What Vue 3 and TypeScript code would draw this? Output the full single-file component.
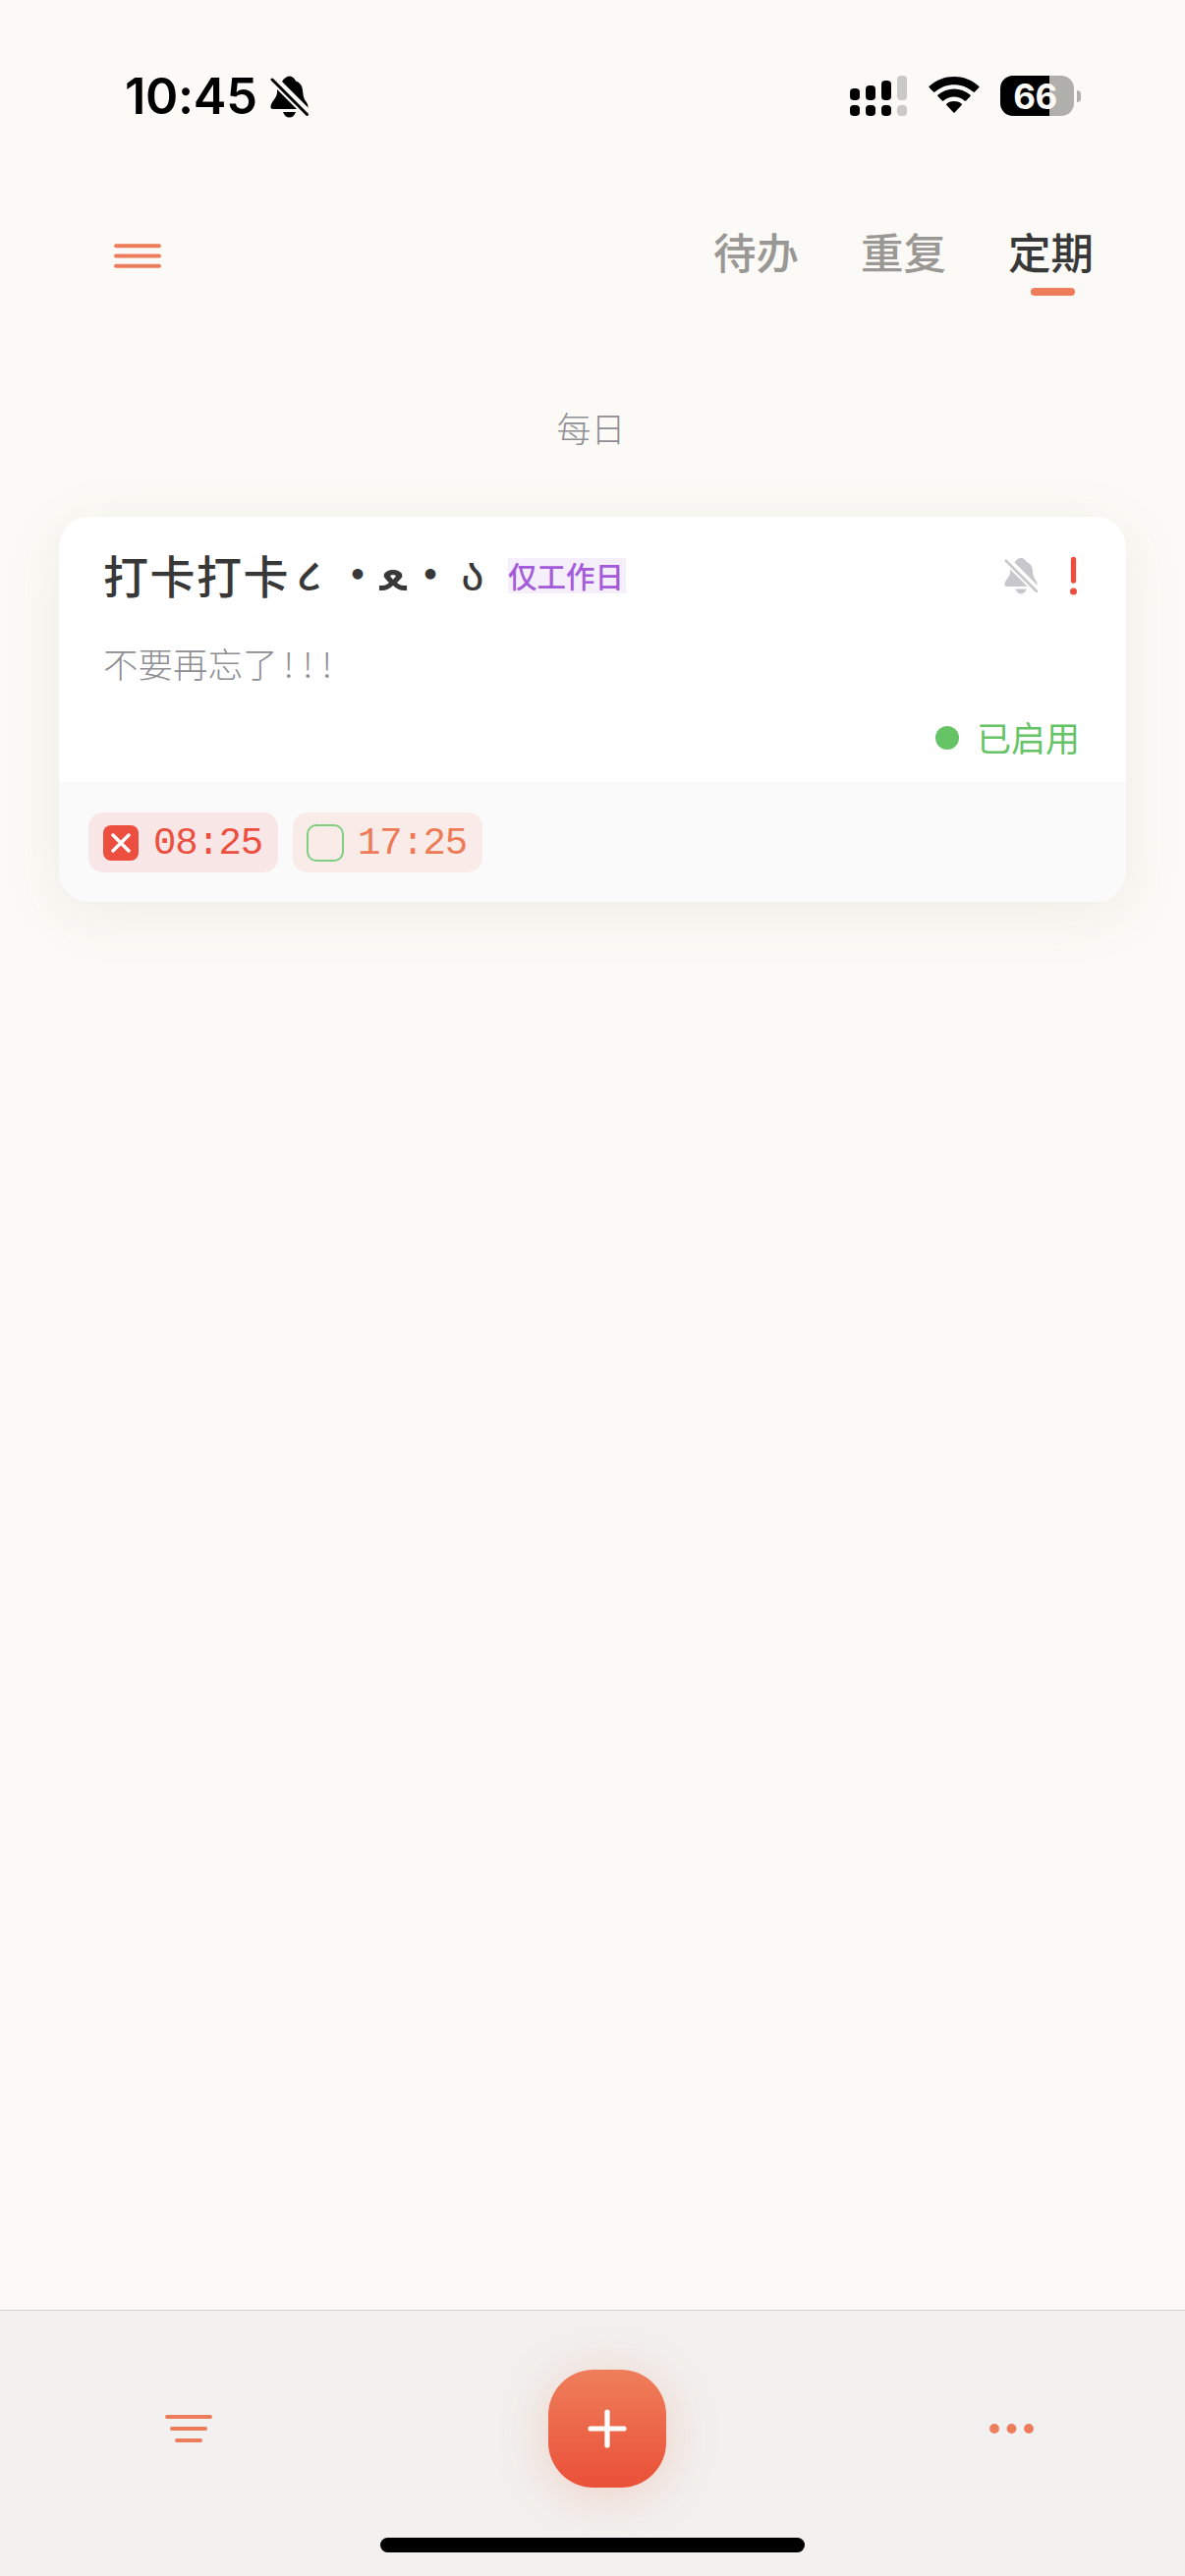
<script setup lang="ts">
interface Tab { label: string; active: boolean }
interface Slot { time: string; missed: boolean }

const tabs: Tab[] = [
  { label: '待办', active: false },
  { label: '重复', active: false },
  { label: '定期', active: true },
]
const slots: Slot[] = [
  { time: '08:25', missed: true },
  { time: '17:25', missed: false },
]
</script>

<template>
  <div class="screen">
    <header class="status">
      <span class="clock">10:45</span>
      <svg class="bell" width="40" height="43" viewBox="0 0 40 43">
        <path d="M7 14C8 23 2 24 .5 31Q0 34 3 34H27Z M12 6Q15 1 19.500 .5Q24 1 26 5.500C33 8 33 14 33.500 19C34 26 39 27 38.500 32.500Z M13 37H26Q24 42.500 19.500 42.500Q15 42.500 13 37Z" />
        <path class="slash" d="M2 4L37.500 39.500" />
      </svg>
      <div class="spacer"></div>
      <svg class="signal" width="58" height="42" viewBox="0 0 58 42">
        <rect x="0" y="13" width="10" height="12" rx="4" /><rect x="16" y="10" width="10" height="15" rx="4" />
        <rect x="32" y="5" width="10" height="20" rx="4" /><rect class="dim" x="48" y="0" width="10" height="25" rx="4" />
        <rect x="0" y="30" width="10" height="11" rx="4" /><rect x="16" y="30" width="10" height="11" rx="4" />
        <rect x="32" y="30" width="10" height="11" rx="4" /><rect class="dim" x="48" y="30" width="10" height="11" rx="4" />
      </svg>
      <svg class="wifi" width="52" height="38" viewBox="0 0 52 38">
        <path d="M.8 11.200Q0 10.500 .8 9.700C15-3.200 37-3.200 51.200 9.700Q52 10.500 51.200 11.200L47 15.600Q46.300 16.300 45.500 15.600C34.500 5.700 17.500 5.700 6.500 15.600Q5.700 16.300 5 15.600Z" />
        <path d="M9.500 20Q8.800 19.300 9.600 18.500C19 10.500 33 10.500 42.400 18.500Q43.200 19.300 42.500 20L38.200 24.500Q37.500 25.200 36.700 24.500C30.500 19.200 21.500 19.200 15.300 24.500Q14.500 25.200 13.800 24.500Z" />
        <path d="M18.300 29Q17.600 28.300 18.500 27.500C23 24.300 29 24.300 33.500 27.500Q34.400 28.300 33.700 29L26.600 36.500Q26 37 25.400 36.500Z" />
      </svg>
      <div class="battery">66</div>
      <div class="nub"></div>
    </header>

    <nav class="nav">
      <svg class="menu" width="48" height="25" viewBox="0 0 48 25"><path d="M2 2.300H46M2 12.500H46M2 22.700H46" /></svg>
      <div class="tabs">
        <div v-for="t in tabs" :key="t.label" class="tab" :class="{ active: t.active }">{{ t.label }}</div>
      </div>
    </nav>

    <h2 class="group">每日</h2>

    <section class="card">
      <div class="body">
        <div class="row">
          <div class="title">
            <span>打卡打卡</span><span class="face k1">૮</span><span class="face k2">・</span><span class="face k3">ﻌ</span><span class="face k4">・</span><span class="face k5">ა</span>
          </div>
          <span class="tag">仅工作日</span>
          <div class="spacer"></div>
          <svg class="muted" width="35" height="38" viewBox="0 0 40 43">
            <path d="M7 14C8 23 2 24 .5 31Q0 34 3 34H27Z M12 6Q15 1 19.500 .5Q24 1 26 5.500C33 8 33 14 33.500 19C34 26 39 27 38.500 32.500Z M13 37H26Q24 42.500 19.500 42.500Q15 42.500 13 37Z" />
            <path class="slash" d="M2 4L37.500 39.500" />
          </svg>
          <svg class="alert" width="7" height="40" viewBox="0 0 7 40"><path d="M3.500 3.500V25" /><circle cx="3.500" cy="36" r="3.500" /></svg>
        </div>
        <p class="desc">不要再忘了<span>!!!</span></p>
        <div class="state"><i></i><span>已启用</span></div>
      </div>
      <div class="slots">
        <div v-for="s in slots" :key="s.time" class="slot" :class="{ missed: s.missed }">
          <span class="box"><svg v-if="s.missed" width="20" height="20" viewBox="0 0 20 20"><path d="M2 2L18 18M18 2L2 18" /></svg></span>
          <span class="time">{{ s.time }}</span>
        </div>
      </div>
    </section>

    <footer class="bar">
      <svg class="filter" width="48" height="28" viewBox="0 0 48 28"><path d="M2 2H46M7 14H41M12 26H36" /></svg>
      <button class="add"><svg width="40" height="40" viewBox="0 0 40 40"><path d="M20 3V37M3 20H37" /></svg></button>
      <svg class="more" width="46" height="10" viewBox="0 0 46 10"><circle cx="5" cy="5" r="4.900" /><circle cx="22.500" cy="5" r="4.900" /><circle cx="40" cy="5" r="4.900" /></svg>
      <div class="home"></div>
    </footer>
  </div>
</template>

<style>
body { background: #fcfaf6; }
</style>

<style scoped>
.screen { width: 1206px; height: 2622px; box-sizing: border-box; overflow: hidden; display: flex; flex-direction: column; background: #fcfaf6; font-family: "Noto Sans CJK SC", sans-serif; color: #383838; }
svg { display: block; flex: none; }
.spacer { flex: 1; }
.status { height: 196px; box-sizing: border-box; padding: 77px 106px 0 127px; display: flex; align-items: flex-start; }
.clock { font: 600 50.500px/42px Inter, sans-serif; color: #000; letter-spacing: -.3px; }
.bell { margin: 0 0 0 13px; }
.slash { fill: none; stroke: currentColor; stroke-width: 3; stroke-linecap: round; }
.bell .slash { stroke: #000; }
.signal .dim { fill: #c9c9c5; }
.signal { margin-right: 22px; }
.wifi { margin: 1px 21px 0 0; }
.battery { width: 75px; height: 41px; box-sizing: border-box; padding-right: 4px; border-radius: 13px; background: linear-gradient(90deg, #000 50px, #b0afac 50px); color: #fcfaf6; font: 700 35px/42px Inter, sans-serif; text-align: center; letter-spacing: -.5px; }
.nub { width: 4px; height: 12px; margin: 15px 0 0 3px; border-radius: 0 4px 4px 0; background: #b0afac; }

.nav { height: 194px; box-sizing: border-box; padding: 27px 93px 0 116px; display: flex; justify-content: space-between; align-items: flex-start; }
.menu { margin-top: 25px; }
.menu path, .filter path { stroke: #ed7d5a; stroke-width: 4; stroke-linecap: round; fill: none; }
.tabs { display: flex; gap: 63px; }
.tab { font-size: 43.500px; line-height: 66px; height: 78px; font-weight: 500; color: #999895; display: flex; flex-direction: column; align-items: center; }
.tab.active { color: #383838; }
.tab.active::after { content: ""; width: 45px; height: 9px; margin: 4px 0 0 3px; border-radius: 5px; background: #ed7d5a; }

.group { margin: 20px 0 0; padding-right: 3px; font-size: 35px; line-height: 50px; height: 50px; font-weight: 300; text-align: center; color: #8e8e93; }
.card { margin: 66px 60px 0; height: 392px; flex: none; border-radius: 31px; overflow: hidden; background: #fff; box-shadow: 0 12px 60px rgba(100, 95, 60, .09); display: flex; flex-direction: column; }
.body { height: 270px; box-sizing: border-box; padding: 31px 50px 0 45px; }
.row { display: flex; height: 54px; align-items: center; }
.title { display: flex; font-size: 46px; line-height: 54px; font-weight: 500; letter-spacing: 1.500px; }
.face { position: relative; letter-spacing: 0; font-family: "Noto Sans Gujarati", "Noto Sans CJK SC", "Noto Sans", "DejaVu Sans", sans-serif; text-align: center; display: flex; justify-content: center; }
.k1 { width: 41px; top: 6px; left: -1px; }
.k2 { width: 64px; top: 6px; left: -4px; }
.k3 { width: 10px; top: 4px; left: -5px; font-size: 56px; }
.k4 { width: 64px; top: 6px; left: -4px; }
.k5 { width: 24px; top: 5px; left: -5px; }
.tag { height: 36px; width: 120px; margin: 3px 0 0 19px; background: #f5eefb; color: #a45bd9; font-size: 29.500px; line-height: 35px; font-weight: 500; }
.muted { fill: #c7c7cc; color: #c7c7cc; margin: 3px 32px 0 0; }
.alert { fill: #ec4f3f; margin-top: 3px; }
.alert path { stroke: #ec4f3f; stroke-width: 5.300; stroke-linecap: round; }
.desc { margin: 37px 0 0; font-size: 35.500px; line-height: 54px; font-weight: 300; color: #8e8e93; display: flex; }
.desc span { letter-spacing: 9px; padding-left: 6px; }
.state { margin: 22px -3px 0 0; height: 54px; display: flex; justify-content: flex-end; align-items: center; gap: 18px; font-size: 35px; color: #65c466; font-weight: 400; }
.state span { line-height: 50px; padding-bottom: 3px; }
.state i { width: 24px; height: 24px; border-radius: 50%; background: #65c466; }
.slots { height: 122px; box-sizing: border-box; padding: 31px 30px; display: flex; gap: 15px; background: #fafafa; }
.slot { width: 193px; height: 61px; box-sizing: border-box; padding-left: 14px; border-radius: 15px; display: flex; align-items: center; background: #f9ece8; color: #ee7b58; }
.slot.missed { background: #f8e7e6; color: #ec4f3f; padding-left: 15px; }
.box { width: 38px; height: 38px; box-sizing: border-box; border: 2px solid #7fcf80; border-radius: 10px; margin-right: 14px; display: flex; align-items: center; justify-content: center; }
.missed .box { width: 36px; height: 36px; border: 0; background: #ec4f3f; border-radius: 8px; margin-right: 15px; }
.box path { stroke: #fff; stroke-width: 3.500; stroke-linecap: round; }
.time { font: 400 39px/61px "Liberation Mono", monospace; letter-spacing: -1.200px; padding-top: 3px; }

.bar { margin-top: auto; height: 271px; box-sizing: border-box; border-top: 1px solid #d2d2cf; background: #f2f1ef; display: grid; grid-template-columns: 390px 456px 360px; grid-template-rows: 231px 40px; align-items: start; }
.filter { margin: 106px 0 0 168px; }
.add { margin: 60px 0 0 168px; width: 120px; height: 120px; padding: 0; border: 0; border-radius: 46px; background: linear-gradient(#ee7e5b, #ea5038); box-shadow: 0 6px 54px rgba(236, 90, 60, .24); display: flex; align-items: center; justify-content: center; }
.add svg { margin-left: -1px; }
.add path { stroke: #fff; stroke-width: 5.200; stroke-linecap: round; }
.more { margin: 115px 0 0 161px; fill: #ed7d5a; }
.home { grid-column: 1 / -1; justify-self: center; width: 432px; height: 15px; margin-left: -1px; border-radius: 8px; background: #000; }
</style>
